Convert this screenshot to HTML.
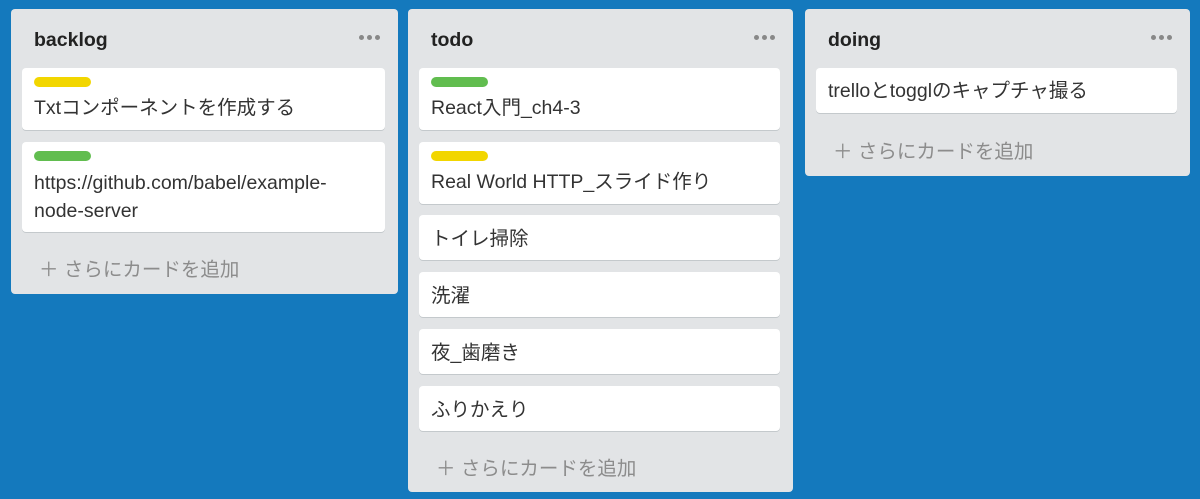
<!DOCTYPE html>
<html><head><meta charset="utf-8"><style>
*{margin:0;padding:0;box-sizing:border-box}
body{width:1200px;height:499px;background:#1479bd;font-family:"Liberation Sans","Noto Sans CJK JP",sans-serif;position:relative;overflow:hidden}
.list{position:absolute;top:9px;background:#e2e4e6;border-radius:4px}
.title{position:absolute;left:23px;top:20px;font-weight:bold;font-size:19.5px;color:#222}
.dots{position:absolute;right:18px;top:26px;display:flex;gap:3px}
.dots i{width:5px;height:5px;border-radius:50%;background:#888;display:block}
.card{position:absolute;left:11px;right:13px;background:#fff;border-radius:4px;box-shadow:0 1px 0 #c4c9cc;padding:0 12px}
.card .t{position:absolute;left:12px;font-size:19.5px;color:#333;line-height:28px;white-space:nowrap}
.lab{position:absolute;left:12px;top:9px;width:57px;height:10px;border-radius:5px}
.y{background:#f2d600}.g{background:#61bd4f}
.add{position:absolute;left:28px;font-size:19.5px;color:#8c8c8c}
</style></head><body>
<div class="list" style="left:11px;width:387px;height:285px">
<div class="title">backlog</div><div class="dots"><i></i><i></i><i></i></div>
<div class="card" style="top:59px;height:62px"><div class="lab y"></div><div class="t" style="top:26px">Txtコンポーネントを作成する</div></div>
<div class="card" style="top:133px;height:90px"><div class="lab g"></div><div class="t" style="top:27px">https://github.com/babel/example-<br>node-server</div></div>
<div class="add" style="top:244px">＋ さらにカードを追加</div>
</div>
<div class="list" style="left:408px;width:385px;height:483px">
<div class="title">todo</div><div class="dots"><i></i><i></i><i></i></div>
<div class="card" style="top:59px;height:62px"><div class="lab g"></div><div class="t" style="top:26px">React入門_ch4-3</div></div>
<div class="card" style="top:133px;height:62px"><div class="lab y"></div><div class="t" style="top:26px">Real World HTTP_スライド作り</div></div>
<div class="card" style="top:206px;height:45px"><div class="t" style="top:10px">トイレ掃除</div></div>
<div class="card" style="top:263px;height:45px"><div class="t" style="top:10px">洗濯</div></div>
<div class="card" style="top:320px;height:45px"><div class="t" style="top:10px">夜_歯磨き</div></div>
<div class="card" style="top:377px;height:45px"><div class="t" style="top:10px">ふりかえり</div></div>
<div class="add" style="top:443px">＋ さらにカードを追加</div>
</div>
<div class="list" style="left:805px;width:385px;height:167px">
<div class="title">doing</div><div class="dots"><i></i><i></i><i></i></div>
<div class="card" style="top:59px;height:45px"><div class="t" style="top:9px">trelloとtogglのキャプチャ撮る</div></div>
<div class="add" style="top:126px">＋ さらにカードを追加</div>
</div>
</body></html>
